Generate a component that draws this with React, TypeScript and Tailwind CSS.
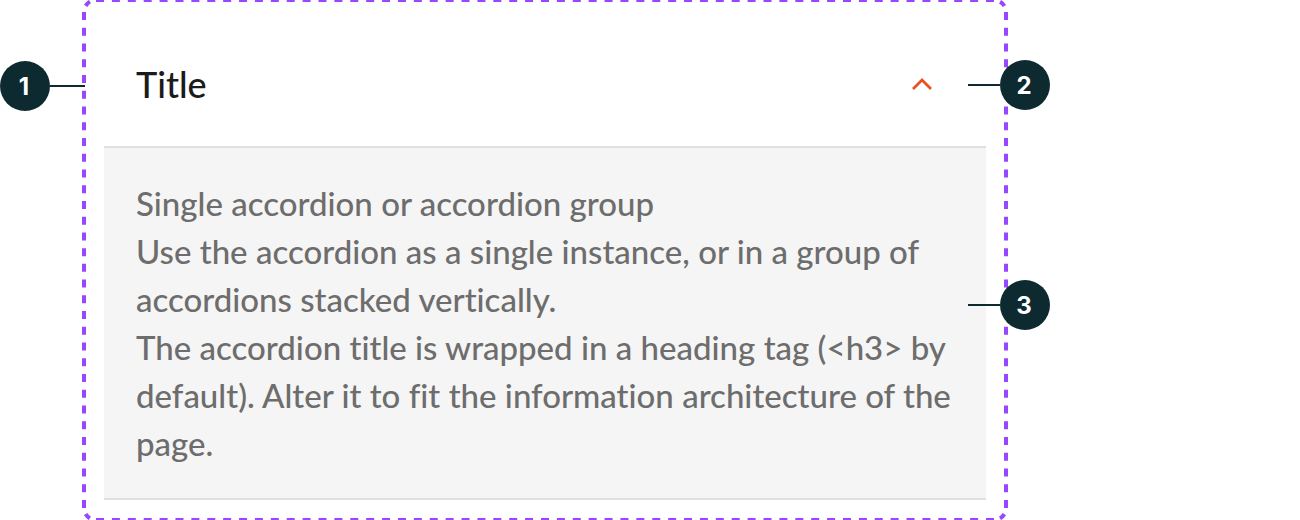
import React, { useState } from 'react';

interface MarkerProps {
  label: string;
  className?: string;
  side?: 'left' | 'right';
}

// Numbered callout with its leader line
const Marker: React.FC<MarkerProps> = ({ label, className = '', side = 'right' }) => {
  return (
    <div
      className={`absolute flex items-center ${
        side === 'left' ? 'flex-row-reverse' : ''
      } ${className}`}
    >
      <span
        className={`h-0.5 bg-[#0d2a30] ${side === 'left' ? 'w-[35px]' : 'w-8'}`}
      />
      <span className="flex size-[50px] items-center justify-center rounded-full bg-[#0d2a30] pt-0.5 pr-0.5 font-[Inter,sans-serif] text-2xl font-bold text-white">
        {label}
      </span>
    </div>
  );
};

// Dashed outline around the component
const Outline: React.FC = () => {
  return (
    <svg
      className="pointer-events-none absolute inset-0 size-full"
      viewBox="0 0 926 520"
      preserveAspectRatio="none"
      fill="none"
      stroke="#9747ff"
      strokeWidth="4"
      aria-hidden="true"
    >
      <path d="M14 0H912M14 520H912" strokeDasharray="8 7.893" />
      <path d="M2 12V508M924 12V508" strokeDasharray="8 7.742" />
      <path
        d="M2 12A12 12 0 0 1 14 0M912 0A12 12 0 0 1 924 12M924 508A12 12 0 0 1 912 520M14 520A12 12 0 0 1 2 508"
        strokeDasharray="0 6.4 6 20"
      />
    </svg>
  );
};

interface AccordionProps {
  title: string;
  children: React.ReactNode;
}

const Accordion: React.FC<AccordionProps> = ({ title, children }) => {
  const [open, setOpen] = useState(true);

  return (
    <section>
      <h3>
        <button
          type="button"
          id="accordion-title"
          aria-expanded={open}
          aria-controls="accordion-panel"
          onClick={() => setOpen(!open)}
          className="flex w-full items-center justify-between px-8 pt-[54px] pb-8 text-left text-4xl leading-[60px] font-medium text-[#1b1b1b]"
        >
          {title}
          <svg
            width="64"
            height="32"
            viewBox="0 0 64 32"
            fill="none"
            stroke="#e8521f"
            strokeWidth="2.8"
            className={open ? '' : 'rotate-180'}
            aria-hidden="true"
          >
            <path d="M23 21L32 12L41 21" />
          </svg>
        </button>
      </h3>
      {open && (
        <div
          id="accordion-panel"
          role="region"
          aria-labelledby="accordion-title"
          className="border-y-2 border-[#e0e0e0] bg-[#f5f5f5] px-8 pt-[31px] pb-[31px] text-[33px] leading-[48px] font-medium text-[#6d6d6d] [font-variant-ligatures:none]"
        >
          {children}
        </div>
      )}
    </section>
  );
};

export default function App() {
  return (
    <main className="w-full max-w-[1050px] bg-white pr-[42px] pl-[82px] font-[Lato,sans-serif]">
      <div className="relative px-[22px] pb-5">
        <Accordion title="Title">
          <p>Single accordion or accordion group</p>
          <p>
            Use the accordion as a single instance, or in a group of accordions stacked
            vertically.
          </p>
          <p>
            The accordion title is wrapped in a heading tag (&lt;h3&gt; by default). Alter it
            to fit the information architecture of the page.
          </p>
        </Accordion>
        <Outline />
        <Marker label="1" side="left" className="top-[61px] -left-[82px]" />
        <Marker label="2" className="top-15 -right-[42px]" />
        <Marker label="3" className="top-[280px] -right-[42px]" />
      </div>
    </main>
  );
}
